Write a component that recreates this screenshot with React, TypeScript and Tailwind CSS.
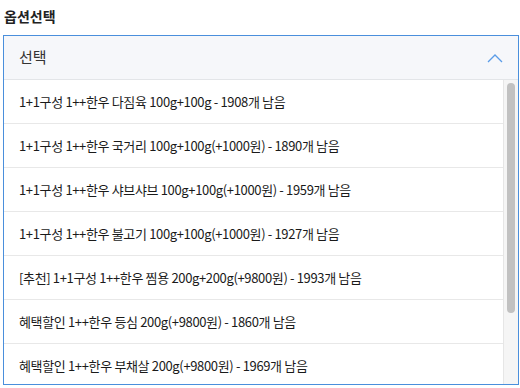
import React from "react";

const items = [
  "1+1구성 1++한우 다짐육 100g+100g - 1908개 남음",
  "1+1구성 1++한우 국거리 100g+100g(+1000원) - 1890개 남음",
  "1+1구성 1++한우 샤브샤브 100g+100g(+1000원) - 1959개 남음",
  "1+1구성 1++한우 불고기 100g+100g(+1000원) - 1927개 남음",
  "[추천] 1+1구성 1++한우 찜용 200g+200g(+9800원) - 1993개 남음",
  "혜택할인 1++한우 등심 200g(+9800원) - 1860개 남음",
  "혜택할인 1++한우 부채살 200g(+9800원) - 1969개 남음",
];

export default function App() {
  return (
    <div
      className="w-[520px] h-[388px] bg-white overflow-hidden relative text-[#222]"
      style={{ fontFamily: '"Noto Sans CJK KR", "Noto Sans", sans-serif' }}
    >
      <div className="h-[35px] pl-[4px] pt-[6px] text-[14px] font-bold leading-[20px] text-[#222]">
        옵션선택
      </div>
      <div className="ml-[3px] w-[516px] h-[350px] border border-[#4a8fdc] flex flex-col overflow-hidden">
        <div className="h-[44px] shrink-0 bg-[#f6f7fa] border-b border-[#e3e5e8] flex items-center justify-between pl-[15px] pr-[15px]">
          <span className="text-[15px] text-[#333]">선택</span>
          <svg width="16" height="10" viewBox="0 0 16 10" fill="none">
            <path d="M1 9 L8 2 L15 9" stroke="#5a9ce8" strokeWidth="1.3" />
          </svg>
        </div>
        <div className="flex flex-1 min-h-0">
          <div className="flex-1 flex flex-col">
            {items.map((t) => (
              <div
                key={t}
                className="h-[44px] shrink-0 border-b border-[#e8e8e8] flex items-center pl-[15px] text-[13px] tracking-[-0.35px] text-[#1a1a1a] whitespace-nowrap"
              >
                {t}
              </div>
            ))}
          </div>
          <div className="w-[15px] shrink-0 bg-[#f5f5f5] border-l border-[#e6e6e6] pt-[3px] pl-[3px]">
            <div className="w-[8px] h-[230px] rounded-full bg-[#c1c1c1]" />
          </div>
        </div>
      </div>
    </div>
  );
}
